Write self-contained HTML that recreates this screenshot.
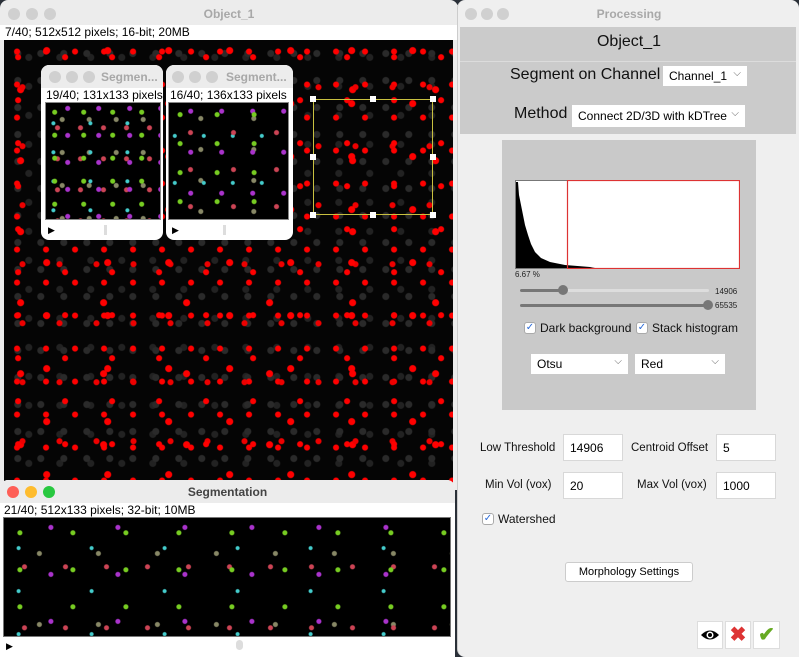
<!DOCTYPE html>
<html><head><meta charset="utf-8"><style>
*{margin:0;padding:0;box-sizing:border-box}
body{width:799px;height:657px;overflow:hidden;background:#2a3038;font-family:"Liberation Sans",sans-serif;position:relative}
.a{position:absolute}
.tl{width:12px;height:12px;border-radius:50%;background:#d0d0d0;position:absolute}
.title{color:#a8a8a8;font-weight:bold;font-size:12px;text-align:center}
.info{font-size:12px;color:#000;white-space:nowrap;overflow:hidden}
.micro{background-color:#050505;
background-image:
radial-gradient(circle at 30% 40%,#f00 0 2.5px,transparent 3.5px),
radial-gradient(circle at 70% 20%,#f00 0 3px,transparent 4px),
radial-gradient(circle at 50% 80%,#e00 0 2.5px,transparent 3.5px),
radial-gradient(circle at 20% 70%,#f00 0 3px,transparent 4px),
radial-gradient(circle at 45% 35%,#f00 0 2.5px,transparent 3.5px),
radial-gradient(circle at 60% 50%,#2a2a2a 0 3px,transparent 4px),
radial-gradient(circle at 80% 60%,#222 0 3px,transparent 4px);
background-size:47px 43px,61px 53px,37px 59px,83px 71px,29px 33px,23px 27px,31px 29px}
.seg{background-color:#000;
background-image:
radial-gradient(circle at 30% 40%,#7c2 0 2px,transparent 3px),
radial-gradient(circle at 70% 20%,#a3c 0 2px,transparent 3px),
radial-gradient(circle at 50% 80%,#c45 0 2px,transparent 3px),
radial-gradient(circle at 20% 70%,#4cc 0 1.5px,transparent 2.5px),
radial-gradient(circle at 60% 50%,#886 0 2px,transparent 3px);
background-size:53px 37px,67px 47px,41px 61px,73px 43px,59px 71px}
.inp{position:absolute;background:#fff;border:1px solid #d8d8d8;font-size:12px;padding:6px 0 0 6px;height:27px}
.lbl{position:absolute;font-size:11.5px;color:#111}
.dd{position:absolute;background:#fff;font-size:12px;padding-left:6px;line-height:20px;height:20px}
.dd:after{content:"⌵";position:absolute;right:6px;top:-2px;font-size:10px;color:#666}
.ck{position:absolute;font-size:12px;color:#111;display:flex;align-items:center;white-space:nowrap}
.cb{display:inline-block;width:12px;height:12px;border:1px solid #aaa;border-radius:3px;background:#fff;color:#2a6ad8;font-size:10px;line-height:10px;text-align:center;margin-right:4px}
</style></head><body>
<div class="a" style="left:0;top:0;width:458px;height:490px;background:#ececec;border-radius:8px 8px 0 0">
 <div class="tl" style="left:8px;top:8px"></div><div class="tl" style="left:26px;top:8px"></div><div class="tl" style="left:44px;top:8px"></div>
 <div class="a title" style="left:0;width:458px;top:7px">Object_1</div>
 <div class="a info" style="left:0;top:25px;width:458px;height:15px;background:#fff;padding-left:5px;line-height:15px">7/40; 512x512 pixels; 16-bit; 20MB</div>
 <div class="a micro" style="left:4px;top:40px;width:449px;height:450px"></div>
 <div class="a" style="left:313px;top:99px;width:120px;height:116px;border:1.5px solid #c8c040"></div>
 <div class="a" style="left:310px;top:96px;width:6px;height:6px;background:#fff"></div>
 <div class="a" style="left:370px;top:96px;width:6px;height:6px;background:#fff"></div>
 <div class="a" style="left:430px;top:96px;width:6px;height:6px;background:#fff"></div>
 <div class="a" style="left:310px;top:154px;width:6px;height:6px;background:#fff"></div>
 <div class="a" style="left:430px;top:154px;width:6px;height:6px;background:#fff"></div>
 <div class="a" style="left:310px;top:212px;width:6px;height:6px;background:#fff"></div>
 <div class="a" style="left:370px;top:212px;width:6px;height:6px;background:#fff"></div>
 <div class="a" style="left:430px;top:212px;width:6px;height:6px;background:#fff"></div>
</div>
<div class="a" style="left:41px;top:65px;width:122px;height:175px;background:#fff;border-radius:8px;overflow:hidden">
 <div class="a" style="left:0;top:0;width:122px;height:23px;background:#ececec"></div>
 <div class="tl" style="left:8px;top:6px"></div><div class="tl" style="left:25px;top:6px"></div><div class="tl" style="left:42px;top:6px"></div>
 <div class="a title" style="left:60px;top:5px">Segmen...</div>
 <div class="a info" style="left:5px;top:23px;width:117px">19/40; 131x133 pixels</div>
 <div class="a seg" style="left:4px;top:37px;width:116px;height:118px;border:1px solid #888;background-size:29px 23px,31px 27px,23px 31px,37px 29px,27px 33px"></div>
 <div class="a" style="left:7px;top:160px;font-size:9px">▶</div>
 <div class="a" style="left:63px;top:160px;width:3px;height:10px;background:#ddd"></div>
</div>
<div class="a" style="left:166px;top:65px;width:127px;height:175px;background:#fff;border-radius:8px;overflow:hidden">
 <div class="a" style="left:0;top:0;width:127px;height:23px;background:#ececec"></div>
 <div class="tl" style="left:6px;top:6px"></div><div class="tl" style="left:23px;top:6px"></div><div class="tl" style="left:40px;top:6px"></div>
 <div class="a title" style="left:60px;top:5px">Segment...</div>
 <div class="a info" style="left:4px;top:23px;width:117px">16/40; 136x133 pixels</div>
 <div class="a seg" style="left:2px;top:37px;width:121px;height:118px;border:1px solid #888;background-size:37px 29px,31px 41px,43px 37px,29px 47px,53px 31px"></div>
 <div class="a" style="left:6px;top:160px;font-size:9px">▶</div>
 <div class="a" style="left:57px;top:160px;width:3px;height:10px;background:#ddd"></div>
</div>
<div class="a" style="left:0;top:480px;width:455px;height:177px;background:#fff;border-radius:8px 8px 0 0;overflow:hidden">
 <div class="a" style="left:0;top:0;width:455px;height:23px;background:#ececec"></div>
 <div class="tl" style="left:7px;top:6px;background:#fe5f57"></div><div class="tl" style="left:25px;top:6px;background:#febc2e"></div><div class="tl" style="left:43px;top:6px;background:#28c840"></div>
 <div class="a" style="left:0;width:455px;top:5px;text-align:center;font-size:12px;font-weight:bold;color:#444">Segmentation</div>
 <div class="a info" style="left:4px;top:23px">21/40; 512x133 pixels; 32-bit; 10MB</div>
 <div class="a seg" style="left:3px;top:37px;width:448px;height:120px;border:1px solid #777"></div>
 <div class="a" style="left:6px;top:161px;font-size:9px">▶</div>
 <div class="a" style="left:236px;top:160px;width:7px;height:10px;border-radius:4px;background:#ddd"></div>
</div>
<div class="a" style="left:457px;top:0;width:342px;height:657px;background:#efefef;border-radius:8px 8px 0 8px;border-left:1px solid #ccc">
 <div class="tl" style="left:7px;top:8px"></div><div class="tl" style="left:23px;top:8px"></div><div class="tl" style="left:39px;top:8px"></div>
 <div class="a title" style="left:0;width:342px;top:7px">Processing</div>
 <div class="a" style="left:2px;top:27px;width:336px;height:107px;background:#cbcbcb"></div>
 <div class="a" style="left:2px;top:61px;width:336px;height:1px;background:#dcdcdc"></div>
 <div class="a" style="left:0;width:342px;top:33px;text-align:center;font-size:16px;color:#111">Object_1</div>
 <div class="a" style="left:52px;top:66px;font-size:16px;color:#111">Segment on Channel</div>
 <div class="dd" style="left:205px;top:66px;width:84px;height:20px">Channel_1</div>
 <div class="a" style="left:56px;top:105px;font-size:16px;color:#111">Method</div>
 <div class="dd" style="left:114px;top:105px;width:173px;height:22px;line-height:22px">Connect 2D/3D with kDTree</div>
 <div class="a" style="left:44px;top:140px;width:254px;height:270px;background:#c9c9c9"></div>
 <div class="a" style="left:57px;top:180px;width:225px;height:89px;background:#fff;border:1px solid #777"></div>
 <svg class="a" style="left:57px;top:180px" width="225" height="89"><path d="M1 88 L1 2 L3 2 L4 15 L6 25 L8 35 L10 45 L13 55 L16 64 L20 72 L26 78 L35 82 L50 85 L75 87 L80 88 Z" fill="#000"/><rect x="52.5" y="0.5" width="172" height="88" fill="none" stroke="#d33" stroke-width="1.2"/></svg>
 <div class="a" style="left:57px;top:270px;font-size:8px;color:#222">6.67 %</div>
 <div class="a" style="left:62px;top:289px;width:189px;height:3px;background:#ddd;border-radius:2px"></div>
 <div class="a" style="left:62px;top:289px;width:43px;height:3px;background:#777;border-radius:2px"></div>
 <div class="a" style="left:100px;top:285px;width:10px;height:10px;border-radius:50%;background:#777"></div>
 <div class="a" style="left:257px;top:287px;font-size:8px;color:#222">14906</div>
 <div class="a" style="left:62px;top:304px;width:189px;height:3px;background:#777;border-radius:2px"></div>
 <div class="a" style="left:245px;top:300px;width:10px;height:10px;border-radius:50%;background:#777"></div>
 <div class="a" style="left:257px;top:301px;font-size:8px;color:#222">65535</div>
 <div class="ck" style="left:66px;top:321px"><span class="cb">✓</span>Dark background</div>
 <div class="ck" style="left:178px;top:321px"><span class="cb">✓</span>Stack histogram</div>
 <div class="dd" style="left:73px;top:354px;width:97px">Otsu</div>
 <div class="dd" style="left:177px;top:354px;width:90px">Red</div>
 <div class="lbl" style="left:22px;top:442px">Low Threshold</div>
 <div class="inp" style="left:105px;top:434px;width:60px">14906</div>
 <div class="lbl" style="left:173px;top:442px">Centroid Offset</div>
 <div class="inp" style="left:258px;top:434px;width:60px">5</div>
 <div class="lbl" style="left:27px;top:479px">Min Vol (vox)</div>
 <div class="inp" style="left:105px;top:472px;width:60px">20</div>
 <div class="lbl" style="left:179px;top:479px">Max Vol (vox)</div>
 <div class="inp" style="left:258px;top:472px;width:60px">1000</div>
 <div class="ck" style="left:24px;top:512px"><span class="cb">✓</span>Watershed</div>
 <div class="a" style="left:107px;top:562px;width:128px;height:20px;background:#fff;border:1px solid #ccc;border-radius:3px;font-size:11px;text-align:center;line-height:18px">Morphology Settings</div>
 <div class="a" style="left:239px;top:621px;width:26px;height:28px;background:#fff;border:1px solid #ddd"><svg width="24" height="26"><path d="M3 13 Q12 4 21 13 Q12 22 3 13Z" fill="#000"/><circle cx="12" cy="13" r="3.5" fill="#fff"/><circle cx="12" cy="13" r="2" fill="#000"/></svg></div>
 <div class="a" style="left:267px;top:621px;width:26px;height:28px;background:#fff;border:1px solid #ddd;text-align:center;line-height:26px;font-size:20px;color:#d33;font-weight:bold">✖</div>
 <div class="a" style="left:295px;top:621px;width:27px;height:28px;background:#fff;border:1px solid #ddd;text-align:center;line-height:26px;font-size:20px;color:#6a2;font-weight:bold">✔</div>
</div>
</body></html>
